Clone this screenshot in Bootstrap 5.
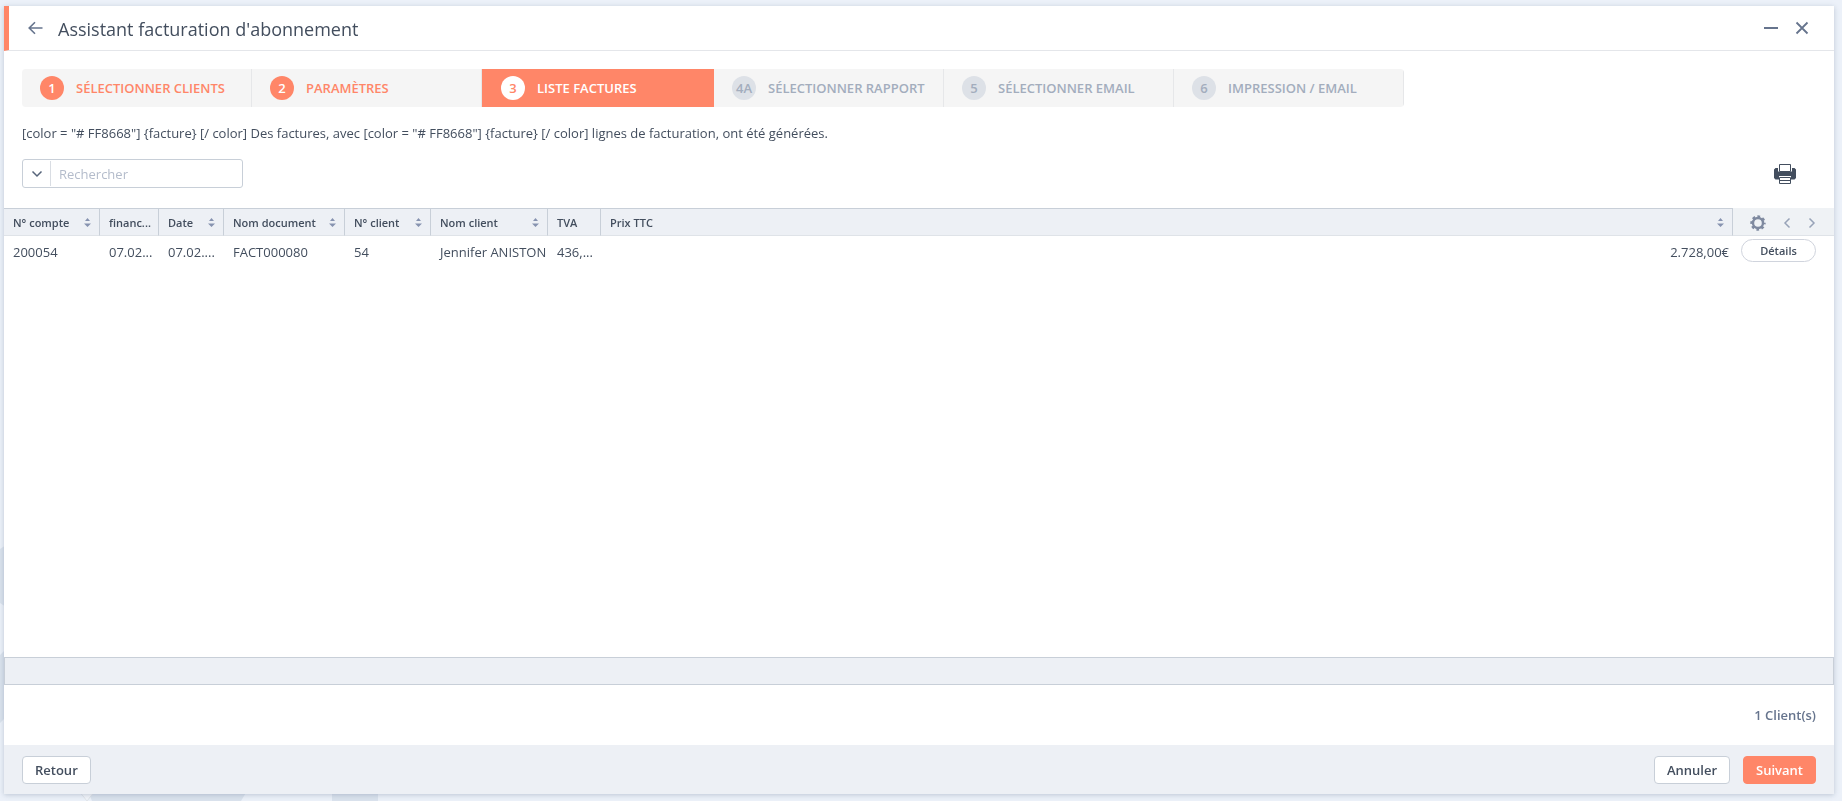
<!DOCTYPE html>
<html lang="fr">
<head>
<meta charset="utf-8">
<meta name="viewport" content="width=device-width, initial-scale=1">
<title>Assistant facturation d'abonnement</title>
<link rel="stylesheet" href="https://cdn.jsdelivr.net/npm/bootstrap@5.3.0/dist/css/bootstrap.min.css">
<style>
  :root { --coral: #ff8668; --ink: #434e5e; --slate: #66748d; --line: #c8cfd8; --pane: #edf0f5; }
  body { font-family: "Open Sans", sans-serif; font-size: 13px; line-height: 20px; color: var(--ink); background: #ecf1f9; padding: 6px 8px 7px 4px; }
  .backdrop { position: fixed; left: 0; bottom: 0; z-index: -1; }
  .wizard { background: #fff; box-shadow: 0 1px 5px rgba(70, 90, 120, .28); }
  .wizard-head { height: 45px; border-bottom: 1px solid #e4e6ea; border-left: 5px solid var(--coral); padding: 0 25px 0 19px; }
  .wizard-head h1 { font-size: 18px; line-height: 24px; font-weight: 400; padding-top: 2px; margin: 0 auto 0 15px; }
  .icon-btn { border: 0; background: none; padding: 0; color: var(--slate); display: flex; }
  .steps { margin: 18px 18px 0; border-radius: 4px; overflow: hidden; width: fit-content; }
  .step { width: 230px; height: 38px; padding: 0 18px; gap: 12px; background: #f5f5f5; border-right: 1px solid #e6e7e9; color: #a3adbd; font-weight: 600; text-decoration: none; white-space: nowrap; }
  .step-no { width: 24px; height: 24px; border-radius: 50%; background: #dde1e7; flex: none; margin-bottom: 1px; }
  .step.done { color: var(--coral); }
  .step.done .step-no { background: var(--coral); color: #fff; }
  .step.active { width: 232px; padding-left: 19px; background: var(--coral); border-color: var(--coral); color: #fff; }
  .step.active .step-no { background: #fff; color: var(--coral); }
  .toolbar { padding: 16px 18px 20px; }
  .search { width: 221px; height: 29px; border: 1px solid var(--line); border-radius: 3px; }
  .search button { width: 28px; height: 25px; border-right: 1px solid #d9dde3; align-items: center; justify-content: center; }
  .search input { border: 0; outline: 0; padding: 0 8px; min-width: 0; color: var(--ink); background: none; }
  .search input::placeholder { color: #b4bccb; opacity: 1; }
  .invoices { table-layout: fixed; width: 100%; border-collapse: separate; border-spacing: 0; }
  .invoices th { height: 28px; padding: 1px 8px 0 9px; background: var(--pane); border: solid var(--line); border-width: 1px 1px 0 0; border-bottom: 1px solid #dfe3e8; font-size: 11px; line-height: 16px; font-weight: 600; white-space: nowrap; }
  .invoices th.tools { background: #eff2f5; border-top-color: #eff2f5; border-right: 0; }
  .tool-row { padding-left: 8px; gap: 17px; }
  .invoices td { height: 31px; padding: 0 0 0 9px; white-space: nowrap; overflow: hidden; text-overflow: ellipsis; }
  .invoices td.amount { padding-right: 4px; text-align: right; }
  .invoices td.row-action { padding: 0 0 2px 8px; }
  .sort { color: #8793b0; }
  .details { width: 75px; height: 23px; border: 1px solid #d0d4dd; border-radius: 12px; background: #fff; font-size: 11px; line-height: 16px; font-weight: 600; color: var(--ink); padding: 0; }
  .total-bar { height: 28px; background: var(--pane); border: 1px solid var(--line); }
  .count { height: 60px; padding: 0 18px; font-weight: 600; color: var(--slate); }
  .wizard-foot { height: 49px; background: var(--pane); padding: 0 18px; gap: 13px; }
  .wizard-foot .btn { height: 28px; padding: 0 12px; font-size: 13px; line-height: 20px; font-weight: 600; border: 1px solid var(--line); border-radius: 4px; background: #fff; color: var(--ink); }
  .wizard-foot .btn-next { background: var(--coral); border-color: var(--coral); color: #fff; }
</style>
</head>
<body class="d-flex flex-column min-vh-100">
<svg class="backdrop" width="400" height="260" aria-hidden="true">
  <path fill="#dae2ed" d="M0 8L6 4V66L0 62ZM0 114L6 108V176L0 182ZM88 250H247L241 260H92ZM332 250H378V260H332Z"/>
  <path fill="#f2f5fa" stroke="#dfe3e9" d="M79 250L87 260L95 250"/>
</svg>

<main class="wizard d-flex flex-column flex-grow-1">
  <header class="wizard-head d-flex align-items-center">
    <button class="icon-btn" aria-label="Précédent"><svg width="15" height="14" fill="none" stroke="currentColor" stroke-width="1.6"><path d="M14.5 7H1.5M7 1.2L1.2 7L7 12.8"/></svg></button>
    <h1>Assistant facturation d'abonnement</h1>
    <div class="d-flex align-items-center gap-3">
      <button class="icon-btn" aria-label="Réduire"><svg width="15" height="12"><path d="M0 6H14" stroke="currentColor" stroke-width="2"/></svg></button>
      <button class="icon-btn" aria-label="Fermer"><svg width="14" height="14" fill="none" stroke="currentColor" stroke-width="1.8"><path d="M1.5 1.5L12.5 12.5M12.5 1.5L1.5 12.5"/></svg></button>
    </div>
  </header>

  <nav class="steps d-flex" aria-label="Étapes">
    <a href="#" class="step done d-flex align-items-center"><span class="step-no d-flex align-items-center justify-content-center">1</span>SÉLECTIONNER CLIENTS</a>
    <a href="#" class="step done d-flex align-items-center"><span class="step-no d-flex align-items-center justify-content-center">2</span>PARAMÈTRES</a>
    <a href="#" class="step active d-flex align-items-center" aria-current="step"><span class="step-no d-flex align-items-center justify-content-center">3</span>LISTE FACTURES</a>
    <a href="#" class="step d-flex align-items-center"><span class="step-no d-flex align-items-center justify-content-center">4A</span>SÉLECTIONNER RAPPORT</a>
    <a href="#" class="step d-flex align-items-center"><span class="step-no d-flex align-items-center justify-content-center">5</span>SÉLECTIONNER EMAIL</a>
    <a href="#" class="step d-flex align-items-center"><span class="step-no d-flex align-items-center justify-content-center">6</span>IMPRESSION / EMAIL</a>
  </nav>

  <section class="toolbar">
    <p class="mb-3">[color = "# FF8668"] {facture} [/ color] Des factures, avec [color = "# FF8668"] {facture} [/ color] lignes de facturation, ont été générées.</p>
    <div class="d-flex align-items-center justify-content-between">
      <div class="search d-flex align-items-center">
        <button class="icon-btn" aria-label="Filtres"><svg width="12" height="8" fill="none" stroke="#56647a" stroke-width="1.5"><path d="M1.5 1.5L6 6L10.5 1.5"/></svg></button>
        <input type="text" class="flex-grow-1" placeholder="Rechercher" aria-label="Rechercher">
      </div>
      <button class="icon-btn me-3 pe-1" aria-label="Imprimer">
        <svg width="22" height="22" fill="none" stroke="#434e5e"><path fill="#434e5e" stroke="none" d="M1.500 5H4V8.500H18V5H20.500L22 6.500V15L20.500 16.500H17V13H5V16.500H1.500L0 15V6.500Z"/><path fill="#fff" d="M5.500 1.500H16.500V8.500H5.500ZM5.500 14.500H16.500V20.500H5.500ZM5.500 17.500H16.500"/></svg>
      </button>
    </div>
  </section>

  <table class="invoices">
    <colgroup><col style="width:96px"><col style="width:59px"><col style="width:65px"><col style="width:121px"><col style="width:86px"><col style="width:117px"><col style="width:53px"><col><col style="width:101px"></colgroup>
    <thead>
      <tr>
        <th><div class="d-flex align-items-center justify-content-between">N° compte<svg class="sort" width="7" height="9" fill="currentColor"><path d="M3.500 0L6 3H1ZM0 5.500H7L3.500 9Z"/></svg></div></th>
        <th>financ...</th>
        <th><div class="d-flex align-items-center justify-content-between">Date<svg class="sort" width="7" height="9" fill="currentColor"><path d="M3.500 0L6 3H1ZM0 5.500H7L3.500 9Z"/></svg></div></th>
        <th><div class="d-flex align-items-center justify-content-between">Nom document<svg class="sort" width="7" height="9" fill="currentColor"><path d="M3.500 0L6 3H1ZM0 5.500H7L3.500 9Z"/></svg></div></th>
        <th><div class="d-flex align-items-center justify-content-between">N° client<svg class="sort" width="7" height="9" fill="currentColor"><path d="M3.500 0L6 3H1ZM0 5.500H7L3.500 9Z"/></svg></div></th>
        <th><div class="d-flex align-items-center justify-content-between">Nom client<svg class="sort" width="7" height="9" fill="currentColor"><path d="M3.500 0L6 3H1ZM0 5.500H7L3.500 9Z"/></svg></div></th>
        <th>TVA</th>
        <th><div class="d-flex align-items-center justify-content-between">Prix TTC<svg class="sort" width="7" height="9" fill="currentColor"><path d="M3.500 0L6 3H1ZM0 5.500H7L3.500 9Z"/></svg></div></th>
        <th class="tools">
          <div class="tool-row d-flex align-items-center">
            <button class="icon-btn" aria-label="Réglages"><svg width="16" height="16" fill="none" stroke="#7f8aa0"><circle cx="8" cy="8" r="5" stroke-width="2.400"/><circle cx="8" cy="8" r="6.500" stroke-width="2.400" stroke-dasharray="2.700 2.405" stroke-dashoffset="1.350"/></svg></button>
            <button class="icon-btn" aria-label="Page précédente"><svg width="8" height="12" fill="none" stroke="#98a3b8" stroke-width="1.500"><path d="M6.500 1.500L2 6L6.500 10.500"/></svg></button>
            <button class="icon-btn" aria-label="Page suivante"><svg width="8" height="12" fill="none" stroke="#98a3b8" stroke-width="1.500"><path d="M1.500 1.500L6 6L1.500 10.500"/></svg></button>
          </div>
        </th>
      </tr>
    </thead>
    <tbody>
      <tr>
        <td>200054</td><td>07.02...</td><td>07.02....</td><td>FACT000080</td><td>54</td><td>Jennifer ANISTON</td><td>436,...</td><td class="amount">2.728,00€</td>
        <td class="row-action"><button class="details d-block">Détails</button></td>
      </tr>
    </tbody>
  </table>

  <div class="total-bar mt-auto"></div>
  <div class="count d-flex align-items-center justify-content-end">1 Client(s)</div>
  <footer class="wizard-foot d-flex align-items-center">
    <button class="btn me-auto">Retour</button>
    <button class="btn">Annuler</button>
    <button class="btn btn-next">Suivant</button>
  </footer>
</main>
<script src="https://cdn.jsdelivr.net/npm/bootstrap@5.3.0/dist/js/bootstrap.bundle.min.js"></script>
</body>
</html>
